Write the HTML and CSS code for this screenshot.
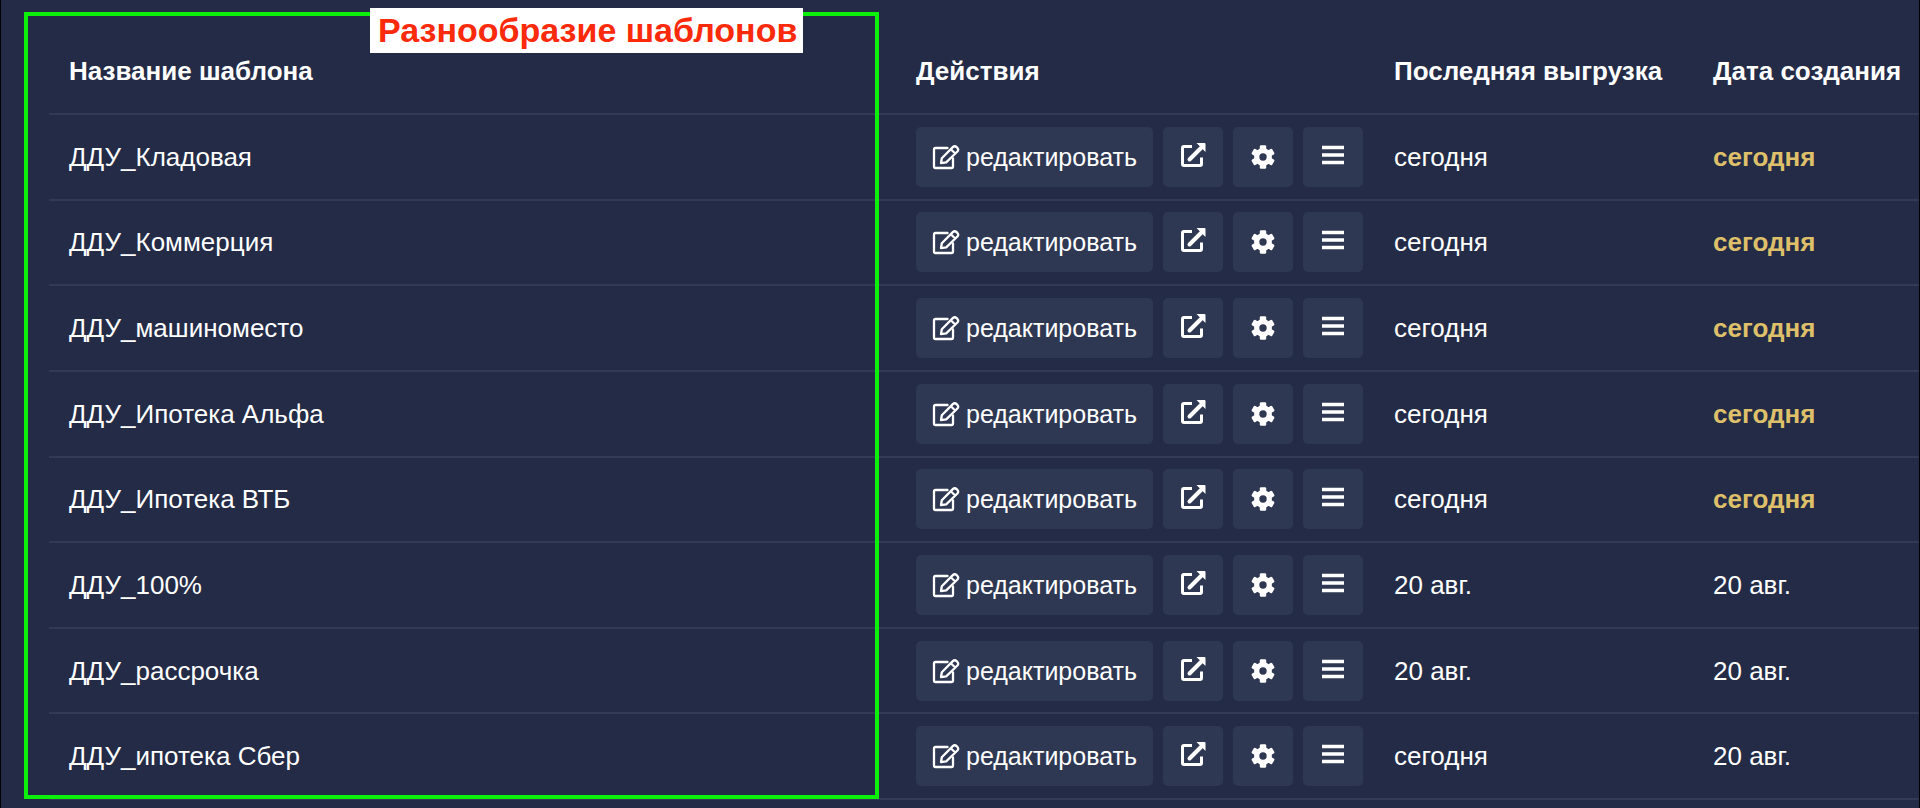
FILE: index.html
```html
<!DOCTYPE html>
<html lang="ru">
<head>
    <meta charset="UTF-8">
    <meta name="viewport" content="width=device-width, initial-scale=1.0">
    <title>Шаблоны</title>
    <link rel="stylesheet" href="styles.css">
</head>
<body>
    <!-- Icons -->
    <svg class="sprite" aria-hidden="true">
        <symbol id="icon-edit" viewBox="0 0 28 26">
            <path d="M15.500 4H3.500Q2 4 2 5.500V22.500Q2 24 3.500 24H19.500Q21 24 21 22.500V14.500" fill="none" stroke="currentColor" stroke-width="2.300" stroke-linecap="round"/>
            <path d="M9 19.200L9.800 14.200L20.800 3.100Q22.700 1.300 24.600 3.100L25.400 3.900Q27 5.700 25.400 7.500L14.200 18.400L9 19.200ZM18.800 5.200L23.200 9.500" fill="none" stroke="currentColor" stroke-width="2.300" stroke-linejoin="round"/>
        </symbol>
        <symbol id="icon-open" viewBox="0 0 26 26">
            <path d="M12 4.500H4Q2.500 4.500 2.500 6V22Q2.500 23.500 4 23.500H20Q21.500 23.500 21.500 22V15.500" fill="none" stroke="currentColor" stroke-width="3"/>
            <path d="M9.500 17.500L21 6" fill="none" stroke="currentColor" stroke-width="4" stroke-linecap="round"/>
            <path d="M16.500 1H24.500Q25.500 1 25.500 2V10Z" fill="currentColor"/>
        </symbol>
        <symbol id="icon-gear" viewBox="0 0 24 24">
            <circle cx="12" cy="12" r="6.300" fill="none" stroke="currentColor" stroke-width="5.200"/>
            <g fill="currentColor">
                <rect x="8.800" y="0.200" width="6.400" height="6" rx="1.200"/>
                <rect x="8.800" y="0.200" width="6.400" height="6" rx="1.200" transform="rotate(60 12 12)"/>
                <rect x="8.800" y="0.200" width="6.400" height="6" rx="1.200" transform="rotate(120 12 12)"/>
                <rect x="8.800" y="0.200" width="6.400" height="6" rx="1.200" transform="rotate(180 12 12)"/>
                <rect x="8.800" y="0.200" width="6.400" height="6" rx="1.200" transform="rotate(240 12 12)"/>
                <rect x="8.800" y="0.200" width="6.400" height="6" rx="1.200" transform="rotate(300 12 12)"/>
            </g>
        </symbol>
        <symbol id="icon-menu" viewBox="0 0 24 24">
            <path d="M1 4.500H23M1 12H23M1 19.500H23" stroke="currentColor" stroke-width="3.600"/>
        </symbol>
    </svg>

    <div class="page">
        <table class="templates">
            <colgroup>
                <col>
                <col class="col-actions">
                <col class="col-export">
                <col class="col-created">
            </colgroup>
            <thead>
                <tr>
                    <th>Название шаблона</th>
                    <th>Действия</th>
                    <th>Последняя выгрузка</th>
                    <th>Дата создания</th>
                </tr>
            </thead>
            <tbody id="templateRows"></tbody>
        </table>

        <div class="highlight">
            <div class="highlight-label">Разнообразие шаблонов</div>
        </div>
    </div>

    <script src="script.js"></script>
</body>
</html>
```
FILE: styles.css
```css
* {
    box-sizing: border-box;
}
body {
    margin: 0;
    background-color: #232b46;
    color: #fff;
    font-family: "Liberation Sans", Arial, sans-serif;
    font-size: 26px;
    line-height: 32px;
}
.sprite {
    display: none;
}
.page {
    position: relative;
    min-height: 100vh;
    padding: 28px 0 8px 48px;
    border-left: 1px solid #000;
    border-right: 1px solid #000;
}
.templates {
    width: 100%;
    height: calc(100vh - 36px);
    table-layout: fixed;
    border-collapse: separate;
    border-spacing: 0;
}
.col-actions {
    width: 478px;
}
.col-export {
    width: 319px;
}
.col-created {
    width: 226px;
}
.templates th,
.templates td {
    padding: 0 0 0 20px;
    border-bottom: 2px solid #323b56;
    text-align: left;
    vertical-align: middle;
    white-space: nowrap;
}
.templates th {
    height: 87px;
}
.actions {
    display: flex;
    gap: 10px;
}
.btn {
    display: flex;
    align-items: center;
    justify-content: center;
    width: 60px;
    height: 60px;
    padding: 0;
    border: none;
    border-radius: 5px;
    background-color: #2f3852;
    color: #fff;
    font: inherit;
    font-size: 25px;
    cursor: pointer;
}
.btn:hover {
    background-color: #3a4460;
}
.btn-edit {
    width: 237px;
    gap: 6px;
}
.icon {
    width: 26px;
    height: 26px;
}
.btn-edit .icon {
    width: 28px;
}
.icon-gear {
    width: 24px;
    height: 24px;
}
.icon-menu {
    width: 24px;
    height: 24px;
    margin-bottom: 4px;
}
.icon-open {
    margin-bottom: 4px;
}
.today {
    color: #dfc06a;
    font-weight: bold;
}
.highlight {
    position: absolute;
    top: 12px;
    right: 1040px;
    bottom: 9px;
    left: 23px;
    border: 4px solid #0cf00c;
    pointer-events: none;
}
.highlight-label {
    position: absolute;
    top: -8px;
    left: 342px;
    padding: 0 6px 0 8px;
    background-color: #fff;
    color: #fa2a0a;
    font-size: 34px;
    font-weight: bold;
    line-height: 45px;
    white-space: nowrap;
}
```
FILE: script.js
```js
const templates = [
    { name: 'ДДУ_Кладовая', exported: 'сегодня', created: 'сегодня' },
    { name: 'ДДУ_Коммерция', exported: 'сегодня', created: 'сегодня' },
    { name: 'ДДУ_машиноместо', exported: 'сегодня', created: 'сегодня' },
    { name: 'ДДУ_Ипотека Альфа', exported: 'сегодня', created: 'сегодня' },
    { name: 'ДДУ_Ипотека ВТБ', exported: 'сегодня', created: 'сегодня' },
    { name: 'ДДУ_100%', exported: '20 авг.', created: '20 авг.' },
    { name: 'ДДУ_рассрочка', exported: '20 авг.', created: '20 авг.' },
    { name: 'ДДУ_ипотека Сбер', exported: 'сегодня', created: '20 авг.' }
];

function icon(name) {
    return `<svg class="icon icon-${name}" aria-hidden="true"><use href="#icon-${name}"/></svg>`;
}

document.getElementById('templateRows').innerHTML = templates.map(item => `
    <tr>
        <td>${item.name}</td>
        <td>
            <div class="actions">
                <button type="button" class="btn btn-edit">${icon('edit')}редактировать</button>
                <button type="button" class="btn" aria-label="Открыть">${icon('open')}</button>
                <button type="button" class="btn" aria-label="Настройки">${icon('gear')}</button>
                <button type="button" class="btn" aria-label="Меню">${icon('menu')}</button>
            </div>
        </td>
        <td>${item.exported}</td>
        <td class="${item.created === 'сегодня' ? 'today' : ''}">${item.created}</td>
    </tr>
`).join('');
```
